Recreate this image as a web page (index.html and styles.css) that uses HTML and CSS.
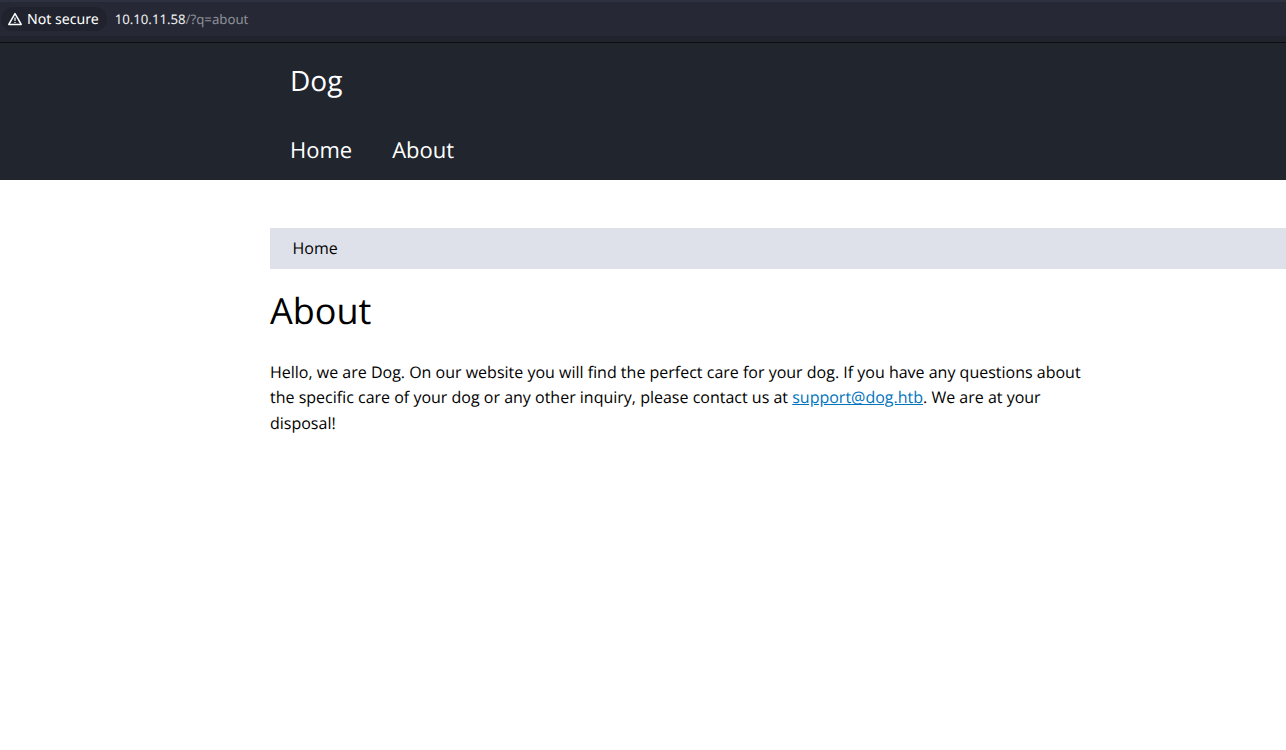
FILE: index.html
```html
<!DOCTYPE html>
<html lang="en">

<head>
    <title>About | Dog</title>
    <link rel="stylesheet" href="styles.css">
</head>

<body>
    <div class="browser-bar">
        <div class="security">
            <svg class="warn" width="16" height="16" viewBox="0 0 16 16">
                <path d="M8 2.6 14.2 13.4H1.8Z" fill="none" stroke="#fff" stroke-width="1.5" stroke-linejoin="round" />
                <path d="M8 6.4V10M8 11V12" fill="none" stroke="#fff" stroke-width="1.2" />
            </svg>
            <span>Not secure</span>
        </div>
        <div class="url">10.10.11.58<span class="url-path">/?q=about</span></div>
    </div>
    <header class="site-header">
        <div class="site-name">Dog</div>
        <nav class="menu">
            <a href="#">Home</a>
            <a href="#">About</a>
        </nav>
    </header>
    <main class="content">
        <div class="breadcrumb">Home</div>
        <h1>About</h1>
        <p>Hello, we are Dog. On our website you will find the perfect care for your dog. If you have any questions about the specific care of your dog or any other inquiry, please contact us at <a href="#">support@dog.htb</a>. We are at your disposal!</p>
    </main>
</body>

</html>
```
FILE: styles.css
```css
* {
    box-sizing: border-box;
}

body {
    margin: 0;
    background: #fff;
    color: #000;
    font-family: "Open Sans", sans-serif;
    font-size: 16px;
    text-rendering: geometricPrecision;
}

.browser-bar {
    display: flex;
    align-items: center;
    height: 43px;
    padding: 0 0 6px 1px;
    background: linear-gradient(#262935 34px, #21242d 34px);
    border-top: 2px solid #2e3140;
    border-bottom: 1px solid #0c0d11;
    font-family: "Noto Sans", sans-serif;
    font-size: 14.1px;
}

.security {
    display: flex;
    align-items: center;
    gap: 4px;
    height: 24px;
    padding: 0 8px 0 6px;
    border-radius: 12px;
    background: #20232d;
    color: #fff;
}

.url {
    margin-left: 8px;
    color: #f1f1f3;
    font-size: 13.2px;
}

.url-path {
    color: #8f919a;
}

.site-header {
    height: 137px;
    padding-left: 270px;
    background: #20252e;
    color: #fff;
}

.site-name {
    padding: 18px 20px 0;
    font-size: 28px;
    line-height: 40px;
}

.menu {
    display: flex;
    gap: 40px;
    padding: 34px 20px 0;
    font-size: 22px;
    line-height: 30px;
}

.menu a {
    color: #fff;
    text-decoration: none;
}

.content {
    padding: 48px 0 0 270px;
}

.breadcrumb {
    height: 41px;
    padding-left: 22.5px;
    background: #dee1ea;
    line-height: 41px;
}

h1 {
    margin: 16px 0 0;
    font-size: 36px;
    font-weight: 400;
    line-height: 52px;
}

p {
    width: 830px;
    margin: 22.7px 0 0;
    line-height: 25.6px;
}

p a {
    color: #0074bd;
}
```
